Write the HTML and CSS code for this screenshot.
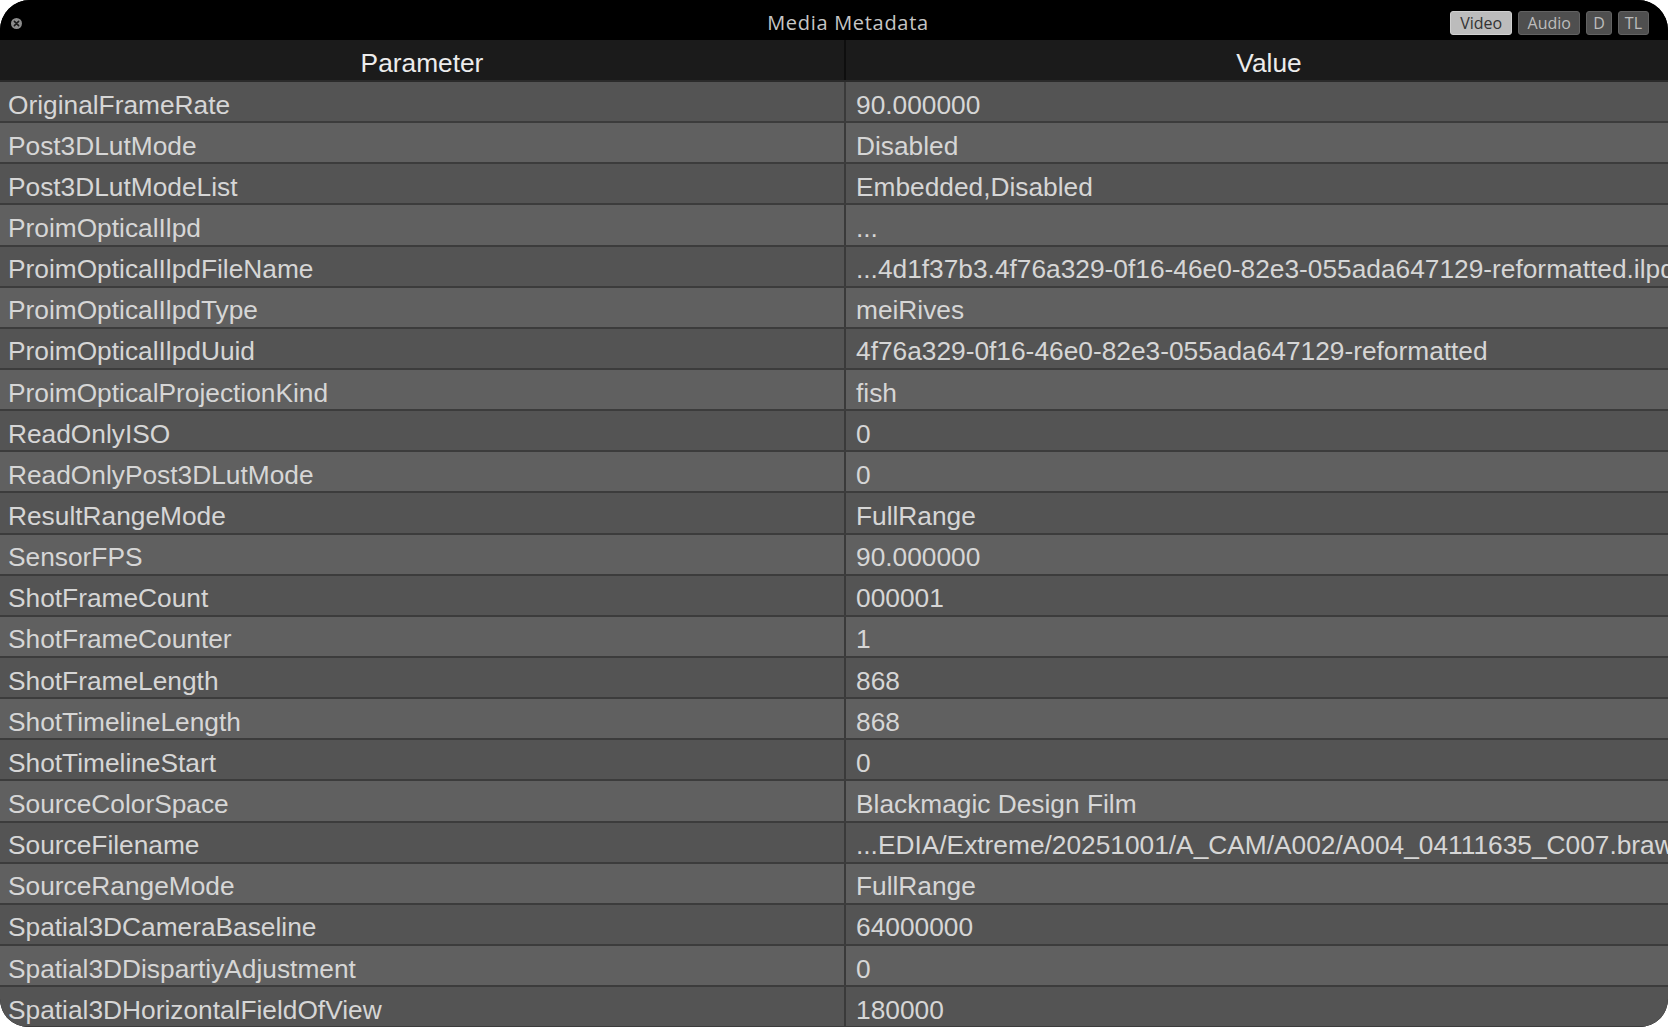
FILE: index.html
```html
<!DOCTYPE html>
<html lang="en">
<head>
    <meta charset="UTF-8">
    <title>Media Metadata</title>
    <link rel="stylesheet" href="styles.css">
</head>
<body>
    <div class="window">
        <div class="titlebar">
            <div class="close">
                <svg width="11" height="11" viewBox="0 0 11 11">
                    <circle cx="5.5" cy="5.5" r="5.5" fill="#8c8c8c"/>
                    <path d="M3.4 3.4 L7.6 7.6 M7.6 3.4 L3.4 7.6" stroke="#1a1a1a" stroke-width="1.6" stroke-linecap="round"/>
                </svg>
            </div>
            <div class="title">Media Metadata</div>
            <div class="tabs">
                <span class="tab wide active">Video</span>
                <span class="tab wide">Audio</span>
                <span class="tab">D</span>
                <span class="tab">TL</span>
            </div>
        </div>
        <div class="table">
            <div class="row head"><div class="cell">Parameter</div><div class="cell">Value</div></div>
            <div class="row"><div class="cell">OriginalFrameRate</div><div class="cell">90.000000</div></div>
            <div class="row"><div class="cell">Post3DLutMode</div><div class="cell">Disabled</div></div>
            <div class="row"><div class="cell">Post3DLutModeList</div><div class="cell">Embedded,Disabled</div></div>
            <div class="row"><div class="cell">ProimOpticalIlpd</div><div class="cell">...</div></div>
            <div class="row"><div class="cell">ProimOpticalIlpdFileName</div><div class="cell">...4d1f37b3.4f76a329-0f16-46e0-82e3-055ada647129-reformatted.ilpd</div></div>
            <div class="row"><div class="cell">ProimOpticalIlpdType</div><div class="cell">meiRives</div></div>
            <div class="row"><div class="cell">ProimOpticalIlpdUuid</div><div class="cell">4f76a329-0f16-46e0-82e3-055ada647129-reformatted</div></div>
            <div class="row"><div class="cell">ProimOpticalProjectionKind</div><div class="cell">fish</div></div>
            <div class="row"><div class="cell">ReadOnlyISO</div><div class="cell">0</div></div>
            <div class="row"><div class="cell">ReadOnlyPost3DLutMode</div><div class="cell">0</div></div>
            <div class="row"><div class="cell">ResultRangeMode</div><div class="cell">FullRange</div></div>
            <div class="row"><div class="cell">SensorFPS</div><div class="cell">90.000000</div></div>
            <div class="row"><div class="cell">ShotFrameCount</div><div class="cell">000001</div></div>
            <div class="row"><div class="cell">ShotFrameCounter</div><div class="cell">1</div></div>
            <div class="row"><div class="cell">ShotFrameLength</div><div class="cell">868</div></div>
            <div class="row"><div class="cell">ShotTimelineLength</div><div class="cell">868</div></div>
            <div class="row"><div class="cell">ShotTimelineStart</div><div class="cell">0</div></div>
            <div class="row"><div class="cell">SourceColorSpace</div><div class="cell">Blackmagic Design Film</div></div>
            <div class="row"><div class="cell">SourceFilename</div><div class="cell">...EDIA/Extreme/20251001/A_CAM/A002/A004_04111635_C007.braw</div></div>
            <div class="row"><div class="cell">SourceRangeMode</div><div class="cell">FullRange</div></div>
            <div class="row"><div class="cell">Spatial3DCameraBaseline</div><div class="cell">64000000</div></div>
            <div class="row"><div class="cell">Spatial3DDispartiyAdjustment</div><div class="cell">0</div></div>
            <div class="row"><div class="cell">Spatial3DHorizontalFieldOfView</div><div class="cell">180000</div></div>
        </div>
    </div>
</body>
</html>
```

FILE: styles.css
```css
body {
    margin: 0;
    padding: 0;
    background-color: #fff;
    font-family: "Liberation Sans", Arial, sans-serif;
}
.window {
    width: 1668px;
    height: 1027px;
    background-color: #000;
    border-radius: 30px 30px 28px 28px;
    overflow: hidden;
}
.titlebar {
    height: 40px;
    display: grid;
    grid-template-columns: 1fr auto 1fr;
    align-items: center;
    background-color: #000;
}
.close {
    display: flex;
    align-items: center;
    padding-left: 11px;
    padding-top: 6px;
}
.close svg {
    display: block;
}
.title {
    font-family: "Open Sans", sans-serif;
    font-size: 20px;
    letter-spacing: 0.7px;
    color: #c6c6c6;
    padding-left: 28px;
    padding-top: 5px;
}
.tabs {
    display: flex;
    justify-content: flex-end;
    gap: 6px;
    padding-right: 19px;
    padding-top: 6px;
}
.tab {
    height: 24px;
    box-sizing: border-box;
    padding: 0 6px;
    display: flex;
    align-items: center;
    justify-content: center;
    border: 1px solid #626262;
    border-radius: 3px;
    background-color: #4f4f4f;
    color: #bdbdbd;
    font-family: "Open Sans", sans-serif;
    font-size: 16px;
}
.tab.wide {
    width: 62px;
    padding: 0;
}
.tab.active {
    background-color: #bcbcbc;
    border-color: #d0d0d0;
    color: #333;
}
.table {
    width: 1692px;
}
.row {
    display: grid;
    grid-template-columns: 846px 846px;
    height: 41.15px;
    box-sizing: border-box;
    border-bottom: 2px solid #3c3c3c;
    background-color: #545454;
    color: #d6d6d6;
    font-size: 26.3px;
}
.row:nth-child(odd) {
    background-color: #606060;
}
.row.head {
    height: 42px;
    background-color: #1b1b1b;
    color: #ececec;
    border-bottom: 2px solid #2b2b2b;
}
.cell {
    display: flex;
    align-items: center;
    padding: 7px 10px 0 10px;
    white-space: nowrap;
    overflow: hidden;
}
.cell:first-child {
    padding-left: 8px;
    border-right: 2px solid #3a3a3a;
}
.head .cell {
    justify-content: center;
    padding: 6px 0 0 0;
}
.head .cell:first-child {
    border-right: 2px solid #0e0e0e;
}
```
